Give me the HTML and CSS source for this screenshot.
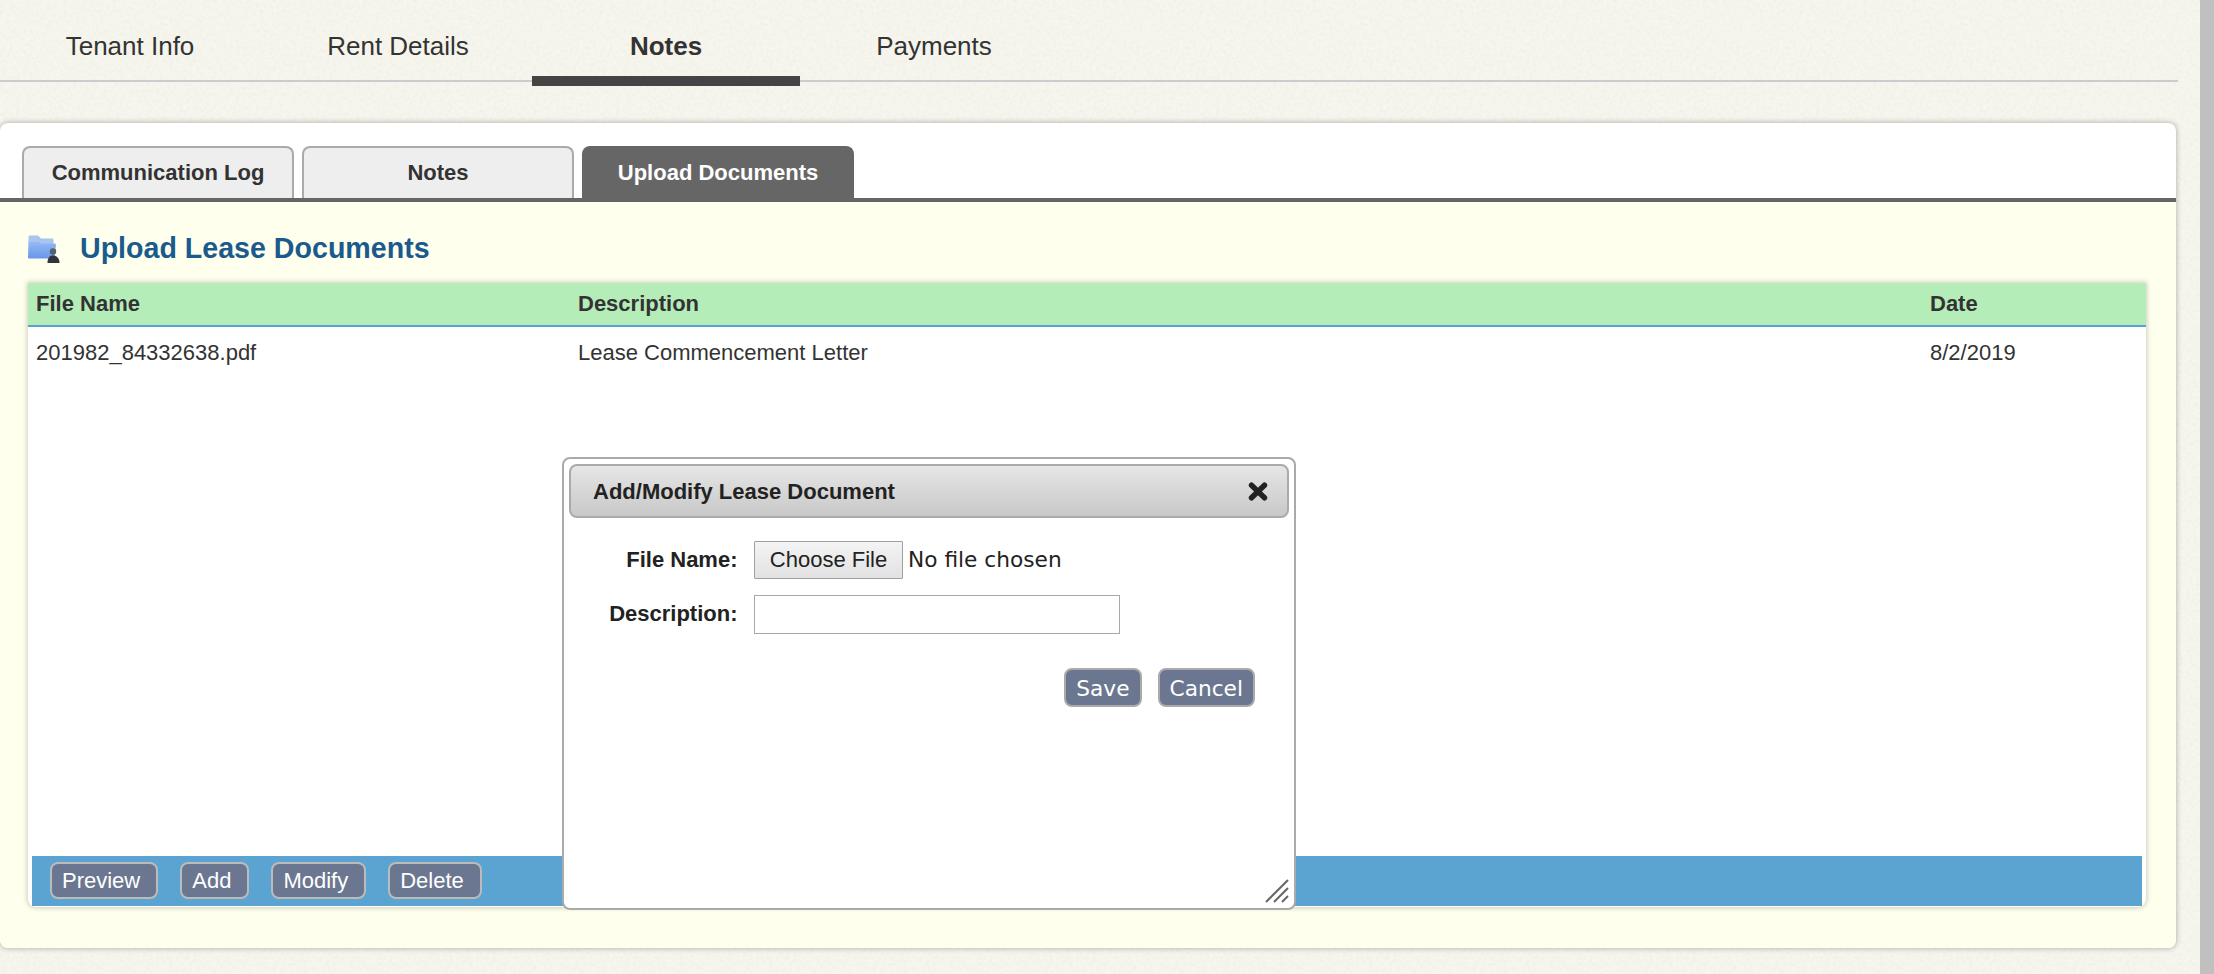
FILE: index.html
```html
<!DOCTYPE html>
<html lang="en">
<head>
<meta charset="utf-8">
<title>Upload Lease Documents</title>
<link rel="stylesheet" href="styles.css">
</head>
<body>
<div class="window">
  <div class="page">
    <nav class="nav">
      <ul class="nav-list">
        <li class="nav-item">Tenant Info</li>
        <li class="nav-item">Rent Details</li>
        <li class="nav-item nav-item-active">Notes</li>
        <li class="nav-item">Payments</li>
      </ul>
    </nav>
    <section class="panel">
      <div class="tabs">
        <div class="tab">Communication Log</div>
        <div class="tab">Notes</div>
        <div class="tab tab-active">Upload Documents</div>
      </div>
      <div class="panel-body">
        <h1 class="heading">
          <svg class="folder" viewBox="0 0 32 28" width="32" height="28" aria-hidden="true">
            <defs>
              <linearGradient id="fg" x1="0" y1="0" x2="0" y2="1">
                <stop offset="0" stop-color="#94b9f5"/>
                <stop offset="1" stop-color="#6897e8"/>
              </linearGradient>
            </defs>
            <path d="M0.5 2 C0.5 1 1 0.5 2 0.5 H10 L13 3.5 H24 C25 3.5 25.5 4 25.5 5 V9 H0.5 Z" fill="#a8c4ef"/>
            <path d="M0 22 L0.5 7 H11 L13 8.5 H26.5 C27.5 8.5 28 9 28 10 L26.5 22 C26.5 23 26 23.5 25 23.5 H1.5 C0.5 23.5 0 23 0 22 Z" fill="url(#fg)"/>
            <circle cx="25" cy="16.5" r="3.2" fill="#59616b"/>
            <path d="M19.5 28 C19.5 23 21.5 20.5 25 20.5 C28.5 20.5 31.5 23 31.5 28 Z" fill="#30353b"/>
          </svg>
          <span>Upload Lease Documents</span>
        </h1>
        <div class="grid">
          <table class="files">
            <thead>
              <tr>
                <th class="col-name">File Name</th>
                <th class="col-desc">Description</th>
                <th>Date</th>
              </tr>
            </thead>
            <tbody>
              <tr>
                <td>201982_84332638.pdf</td>
                <td>Lease Commencement Letter</td>
                <td>8/2/2019</td>
              </tr>
            </tbody>
          </table>
          <div class="toolbar">
            <button class="btn" type="button">Preview</button>
            <button class="btn" type="button">Add</button>
            <button class="btn" type="button">Modify</button>
            <button class="btn" type="button">Delete</button>
          </div>
        </div>
      </div>
    </section>
  </div>
  <div class="scrollbar"></div>

  <div class="dialog">
    <div class="dialog-title">
      <span class="dialog-title-text">Add/Modify Lease Document</span>
      <svg class="close" viewBox="0 0 20 19" width="20" height="19" aria-hidden="true">
        <path d="M3.5 3.2 L16.5 15.8 M16.5 3.2 L3.5 15.8" stroke="#222" stroke-width="5.4" stroke-linecap="round" fill="none"/>
      </svg>
    </div>
    <form class="form">
      <label class="form-label">File Name:</label>
      <div class="file-field">
        <button class="file-btn" type="button">Choose File</button>
        <span class="file-status">No file chosen</span>
      </div>
      <label class="form-label form-label-desc">Description:</label>
      <input class="text-input" type="text">
    </form>
    <div class="dialog-actions">
      <button class="btn btn-dialog" type="button">Save</button>
      <button class="btn btn-dialog" type="button">Cancel</button>
    </div>
    <svg class="grip" viewBox="0 0 24 24" width="24" height="24" aria-hidden="true">
      <path d="M1 23 L23 1 M9 23 L23 9 M17 23 L23 17" stroke="#666" stroke-width="2" fill="none"/>
    </svg>
  </div>
</div>
</body>
</html>
```
FILE: styles.css
```css
* { box-sizing: border-box; }

html, body {
  margin: 0;
  height: 100%;
  overflow: hidden;
}

body {
  font-family: "Liberation Sans", Arial, sans-serif;
  font-size: 22px;
  color: #333;
  background-color: #f6f6ef;
  background-image: url("data:image/svg+xml,%3Csvg xmlns='http://www.w3.org/2000/svg' width='300' height='300'%3E%3Cfilter id='n'%3E%3CfeTurbulence type='fractalNoise' baseFrequency='.3' numOctaves='3' stitchTiles='stitch'/%3E%3CfeColorMatrix values='0 0 0 0 .72 0 0 0 0 .72 0 0 0 0 .58 1.6 0 0 0 -.6'/%3E%3C/filter%3E%3Crect width='300' height='300' filter='url(%23n)' opacity='.3'/%3E%3C/svg%3E");
}

.window {
  position: relative;
  display: flex;
  height: 974px;
}

.page {
  flex: 1;
  min-width: 0;
  padding-right: 22px;
}

.scrollbar {
  width: 14px;
  background: #c0c0c0;
}

/* Top navigation */
.nav {
  height: 82px;
  border-bottom: 2px solid #ccc;
}

.nav-list {
  display: flex;
  align-items: flex-start;
  margin: 0 0 0 -4px;
  padding: 0;
  list-style: none;
}

.nav-item {
  width: 268px;
  padding-top: 30px;
  font-size: 26px;
  line-height: 32px;
  text-align: center;
  color: #333;
}

.nav-item-active {
  height: 86px;
  border-bottom: 10px solid #444;
  font-weight: 700;
  position: relative;
}

/* Panel */
.panel {
  margin: 41px 2px 0 0;
  height: 825px;
  display: flex;
  flex-direction: column;
  border-radius: 8px;
  background: #fff;
  box-shadow: 0 0 5px 1px rgba(0, 0, 0, .24);
  overflow: hidden;
}

.tabs {
  display: flex;
  gap: 8px;
  height: 79px;
  padding: 23px 0 0 22px;
  border-bottom: 4px solid #666;
}

.tab {
  width: 272px;
  height: 52px;
  border: 2px solid #aaa;
  border-bottom: 0;
  border-radius: 8px 8px 0 0;
  background: #eee;
  font-weight: 700;
  line-height: 50px;
  text-align: center;
  color: #333;
}

.tab-active {
  border-color: #666;
  background: #666;
  color: #fff;
}

.panel-body {
  flex: 1;
  display: flex;
  flex-direction: column;
  padding: 33px 30px 41px 28px;
  background: #ffffee;
}

.heading {
  display: flex;
  align-items: center;
  gap: 20px;
  height: 28px;
  margin: 0 0 20px;
  font-size: 28.6px;
  line-height: 26px;
  font-weight: 700;
  color: #1a5a8c;
}

.heading span { margin-top: -2px; }

.folder { flex: none; }

.grid {
  flex: 1;
  display: flex;
  flex-direction: column;
  border-radius: 0 0 8px 8px;
  background: #fff;
  box-shadow: 0 0 5px 1px rgba(0, 0, 0, .2);
}

.files {
  width: 100%;
  border-collapse: collapse;
  table-layout: fixed;
}

.files th {
  height: 43px;
  padding: 0 0 0 8px;
  border-bottom: 2px solid #5b9fd4;
  background: #b5edb9;
  text-align: left;
  font-weight: 700;
  color: #333;
}

.files td {
  padding: 13px 0 0 8px;
  line-height: 26px;
  color: #333;
}

.col-name { width: 542px; }
.col-desc { width: 1352px; }

.toolbar {
  display: flex;
  gap: 22px;
  height: 50px;
  margin: auto 4px 1px;
  padding: 6px 0 0 18px;
  background: #5ba3d0;
}

.btn {
  height: 37px;
  padding: 0 16px 0 10px;
  border: 2px solid #bbb;
  border-radius: 8px;
  background: #6b7790;
  font: 22px/1 "Liberation Sans", Arial, sans-serif;
  color: #fff;
}

/* Dialog */
.dialog {
  position: absolute;
  left: 562px;
  top: 457px;
  width: 734px;
  height: 453px;
  padding: 5px;
  border: 2px solid #aaa;
  border-radius: 8px;
  background: #fff;
}

.dialog-title {
  display: flex;
  align-items: center;
  justify-content: space-between;
  height: 54px;
  padding: 0 19px 0 22px;
  border: 2px solid #aaa;
  border-radius: 8px;
  background: linear-gradient(#e6e6e6, #c8c8c8);
  font-weight: 700;
  color: #222;
}

.dialog-title-text { padding-top: 2px; }

.form {
  display: grid;
  grid-template-columns: 168.5px 1fr;
  column-gap: 16.5px;
  row-gap: 16px;
  align-items: center;
  margin-top: 23px;
}

.form-label {
  font-weight: 700;
  text-align: right;
  color: #222;
}

.form-label-desc { margin-top: -2px; }

.file-field {
  display: flex;
  align-items: center;
  gap: 5px;
}

.file-btn {
  width: 149px;
  height: 38px;
  padding: 0;
  border: 1px solid #a0a0a0;
  border-radius: 1px;
  background: linear-gradient(#f4f4f4, #e2e2e2);
  font: 22px/1 "Liberation Sans", Arial, sans-serif;
  color: #222;
}

.file-status {
  margin-top: -2px;
  font-family: "DejaVu Sans", Verdana, sans-serif;
  font-size: 21.7px;
  color: #222;
}

.text-input {
  display: block;
  width: 366px;
  height: 39px;
  border: 1px solid #a8a8a8;
  border-radius: 0;
  background: #fff;
}

.dialog-actions {
  display: flex;
  justify-content: flex-end;
  gap: 16px;
  margin: 34px 34px 0 0;
}

.btn-dialog {
  height: 39px;
  padding: 2px 10px 0;
  border-color: #aaa;
  font-family: "DejaVu Sans", Verdana, sans-serif;
  font-size: 21.7px;
}

.grip {
  position: absolute;
  right: 5px;
  bottom: 5px;
}
```
